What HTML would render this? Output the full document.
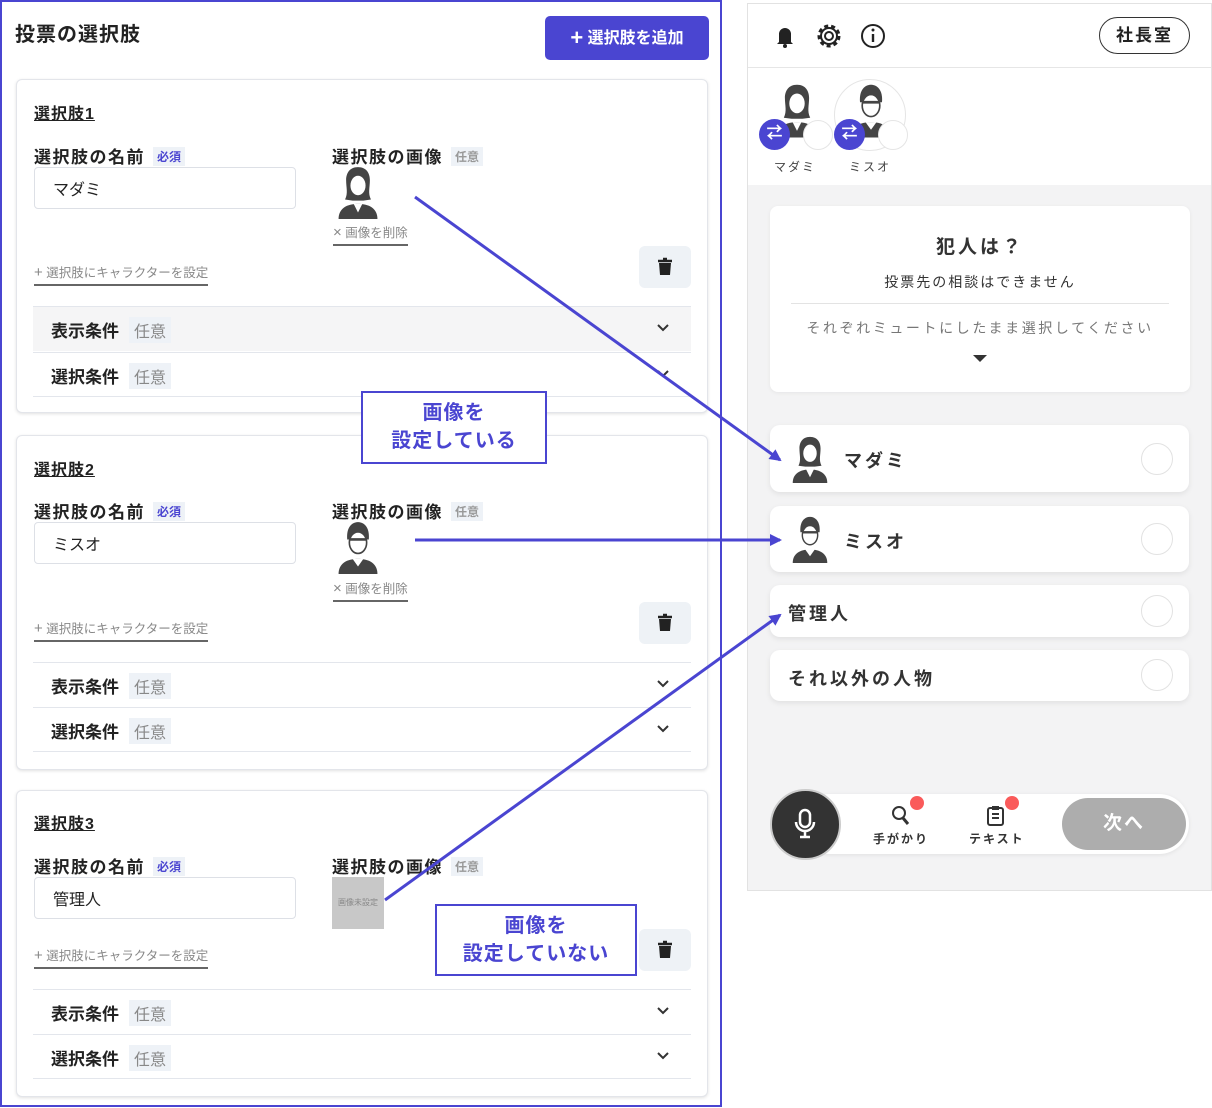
<!DOCTYPE html>
<html><head><meta charset="utf-8"><style>
*{box-sizing:border-box;margin:0;padding:0}
body{width:1212px;height:1108px;background:#fff;position:relative;overflow:hidden;font-family:"Liberation Sans","Noto Sans CJK JP",sans-serif;color:#222}
.a{position:absolute}
.lp{left:0;top:0;width:722px;height:1107px;border:2px solid #4a45d1}
.card{left:16px;width:692px;border:1px solid #e3e5ea;border-radius:6px;box-shadow:0 1px 3px rgba(0,0,0,.12);background:#fff}
.t{font-size:16px;font-weight:bold;text-decoration:underline;color:#222;letter-spacing:1px}
.lb{font-size:17px;font-weight:bold;color:#222;white-space:nowrap;letter-spacing:1.5px}
.tag{display:inline-block;font-size:12px;background:#eef2f7;padding:1px 4px;margin-left:8px;vertical-align:2px;font-weight:bold;letter-spacing:0}
.inp{border:1px solid #dde0e6;border-radius:4px;font-size:16px;padding:8px 18px;color:#222}
.sm{font-size:12.5px;color:#888;border-bottom:2px solid #666;padding-bottom:3px;white-space:nowrap}
.trash{width:52px;height:42px;background:#eef2f6;border-radius:6px}
.row{left:17px;width:658px;height:45px;border-top:1px solid #e3e6ec;font-size:17px;font-weight:bold;padding:10px 18px}
.row .tag2{display:inline-block;font-size:16px;color:#888;background:#eef2f7;padding:1px 5px;margin-left:10px;font-weight:normal}
.chev{position:absolute;right:22px;top:17px}
.rp{left:747px;top:3px;width:465px;height:888px;border:1px solid #e2e2e2;background:#f3f3f4}
.opt{left:770px;width:419px;background:#fff;border-radius:10px;box-shadow:0 2px 6px rgba(0,0,0,.08);font-size:18px;font-weight:bold;color:#333;letter-spacing:3px}
.radio{position:absolute;right:16px;width:32px;height:32px;border:1.5px solid #e2e2e2;border-radius:50%}
.box{border:2px solid #4a45d1;background:#fff;color:#4a45d1;font-size:20px;font-weight:bold;text-align:center;line-height:28px;letter-spacing:1px}
</style></head><body>
<svg width="0" height="0" style="position:absolute"><defs>
<symbol id="w" viewBox="0 0 40 50"><path d="M20 2c-8 0-11 6-11 12 0 7 2 12-1 18l7 1h10l7-1c-3-6-1-11-1-18 0-6-3-12-11-12z" fill="#444"/><ellipse cx="20" cy="19" rx="7" ry="9" fill="#fff"/><path d="M2 50c0-10 8-14 18-14s18 4 18 14z" fill="#444"/><path d="M16 36l4 8 4-8z" fill="#fff"/></symbol>
<symbol id="m" viewBox="0 0 40 50"><path d="M10 18c-1-12 5-16 10-16s11 4 10 16z" fill="#444"/><ellipse cx="20" cy="21" rx="8" ry="10" fill="#fff" stroke="#444" stroke-width="1.5"/><path d="M12 18h16" stroke="#444" stroke-width="2.5"/><path d="M2 50c0-10 8-14 18-14s18 4 18 14z" fill="#444"/><path d="M15 36l5 7 5-7z" fill="#fff"/></symbol>
<symbol id="cv" viewBox="0 0 12 8"><path d="M1 1l5 5 5-5" fill="none" stroke="#333" stroke-width="2"/></symbol>
<symbol id="tr" viewBox="0 0 52 42"><path d="M19 15h14M24 13h4" stroke="#222" stroke-width="2.5"/><path d="M20 17h12l-1 12h-10z" fill="#222"/></symbol>
</defs></svg>

<div class="a lp"></div>
<div class="a" style="left:15px;top:18px;font-size:20px;font-weight:bold;letter-spacing:1px">投票の選択肢</div>
<div class="a" style="left:545px;top:16px;width:164px;height:44px;background:#4a45d1;border-radius:5px;color:#fff;font-weight:bold;font-size:16px;line-height:44px;text-align:center"><span style="font-size:22px;vertical-align:-2px">+</span> 選択肢を追加</div>

<!-- card1 -->
<div class="a card" style="top:79px;height:334px"></div>
<div class="a t" style="left:34px;top:100px">選択肢1</div>
<div class="a lb" style="left:34px;top:143px">選択肢の名前<span class="tag" style="color:#4a45d1">必須</span></div>
<div class="a lb" style="left:332px;top:143px">選択肢の画像<span class="tag" style="color:#999">任意</span></div>
<div class="a inp" style="left:34px;top:167px;width:262px;height:42px">マダミ</div>
<svg class="a" style="left:335px;top:165px" width="46" height="54"><use href="#w"/></svg>
<div class="a sm" style="left:333px;top:222px"><span style="font-size:15px">×</span> 画像を削除</div>
<div class="a sm" style="left:34px;top:262px"><span style="font-size:15px">+</span> 選択肢にキャラクターを設定</div>
<div class="a trash" style="left:639px;top:246px"><svg width="52" height="42"><use href="#tr"/></svg></div>
<div class="a row" style="top:306px;background:#f5f5f6;left:33px">表示条件<span class="tag2">任意</span><svg class="chev" width="12" height="8"><use href="#cv"/></svg></div>
<div class="a row" style="top:352px;left:33px;border-bottom:1px solid #e3e6ec">選択条件<span class="tag2">任意</span><svg class="chev" width="12" height="8"><use href="#cv"/></svg></div>

<!-- card2 -->
<div class="a card" style="top:435px;height:335px"></div>
<div class="a t" style="left:34px;top:456px">選択肢2</div>
<div class="a lb" style="left:34px;top:498px">選択肢の名前<span class="tag" style="color:#4a45d1">必須</span></div>
<div class="a lb" style="left:332px;top:498px">選択肢の画像<span class="tag" style="color:#999">任意</span></div>
<div class="a inp" style="left:34px;top:522px;width:262px;height:42px">ミスオ</div>
<svg class="a" style="left:335px;top:520px" width="46" height="54"><use href="#m"/></svg>
<div class="a sm" style="left:333px;top:578px"><span style="font-size:15px">×</span> 画像を削除</div>
<div class="a sm" style="left:34px;top:618px"><span style="font-size:15px">+</span> 選択肢にキャラクターを設定</div>
<div class="a trash" style="left:639px;top:602px"><svg width="52" height="42"><use href="#tr"/></svg></div>
<div class="a row" style="top:662px;left:33px">表示条件<span class="tag2">任意</span><svg class="chev" width="12" height="8"><use href="#cv"/></svg></div>
<div class="a row" style="top:707px;left:33px;border-bottom:1px solid #e3e6ec">選択条件<span class="tag2">任意</span><svg class="chev" width="12" height="8"><use href="#cv"/></svg></div>

<!-- card3 -->
<div class="a card" style="top:790px;height:307px"></div>
<div class="a t" style="left:34px;top:810px">選択肢3</div>
<div class="a lb" style="left:34px;top:853px">選択肢の名前<span class="tag" style="color:#4a45d1">必須</span></div>
<div class="a lb" style="left:332px;top:853px">選択肢の画像<span class="tag" style="color:#999">任意</span></div>
<div class="a inp" style="left:34px;top:877px;width:262px;height:42px">管理人</div>
<div class="a" style="left:332px;top:877px;width:52px;height:52px;background:#c8c8c8;color:#888;font-size:8px;line-height:52px;text-align:center">画像未設定</div>
<div class="a sm" style="left:34px;top:945px"><span style="font-size:15px">+</span> 選択肢にキャラクターを設定</div>
<div class="a trash" style="left:639px;top:929px"><svg width="52" height="42"><use href="#tr"/></svg></div>
<div class="a row" style="top:989px;left:33px">表示条件<span class="tag2">任意</span><svg class="chev" width="12" height="8"><use href="#cv"/></svg></div>
<div class="a row" style="top:1034px;left:33px;border-bottom:1px solid #e3e6ec">選択条件<span class="tag2">任意</span><svg class="chev" width="12" height="8"><use href="#cv"/></svg></div>

<!-- right panel -->
<div class="a rp"></div>
<div class="a" style="left:748px;top:4px;width:463px;height:181px;background:#fff"></div>
<div class="a" style="left:748px;top:67px;width:463px;height:1px;background:#e6e6e6"></div>
<svg class="a" style="left:770px;top:20px" width="120" height="32">
<path d="M9 22V14a6 6 0 0 1 12 0v8l2 2H7z" fill="#222"/><circle cx="15" cy="26" r="2" fill="#222"/>
<circle cx="59" cy="16" r="4" fill="none" stroke="#222" stroke-width="2"/><circle cx="59" cy="16" r="10" fill="none" stroke="#222" stroke-width="3" stroke-dasharray="4 3"/><circle cx="59" cy="16" r="8" fill="none" stroke="#222" stroke-width="2"/>
<circle cx="103" cy="16" r="11" fill="none" stroke="#222" stroke-width="2"/><path d="M103 14v8" stroke="#222" stroke-width="2.4"/><circle cx="103" cy="10" r="1.5" fill="#222"/>
</svg>
<div class="a" style="left:1099px;top:17px;width:91px;height:37px;border:1.5px solid #333;border-radius:19px;font-size:17px;font-weight:bold;text-align:center;line-height:36px;letter-spacing:2px">社長室</div>
<svg class="a" style="left:775px;top:82px" width="44" height="56"><use href="#w"/></svg>
<div class="a" style="left:834px;top:79px;width:72px;height:72px;border:1px solid #e5e5e5;border-radius:50%"></div>
<svg class="a" style="left:849px;top:82px" width="44" height="56"><use href="#m"/></svg>
<div class="a" style="left:803px;top:120px;width:30px;height:30px;border:1px solid #e5e5e5;border-radius:50%;background:#fff"></div>
<div class="a" style="left:878px;top:120px;width:30px;height:30px;border:1px solid #e5e5e5;border-radius:50%;background:#fff"></div>
<div class="a" style="left:759px;top:119px;width:31px;height:31px;border-radius:50%;background:#4a45d1;color:#fff;font-size:16px;text-align:center;line-height:30px;font-weight:bold">⇄</div>
<div class="a" style="left:834px;top:119px;width:31px;height:31px;border-radius:50%;background:#4a45d1;color:#fff;font-size:16px;text-align:center;line-height:30px;font-weight:bold">⇄</div>
<div class="a" style="left:774px;top:158px;font-size:12px;color:#444;letter-spacing:2px">マダミ</div>
<div class="a" style="left:849px;top:158px;font-size:12px;color:#444;letter-spacing:2px">ミスオ</div>

<div class="a" style="left:770px;top:206px;width:420px;height:186px;background:#fff;border-radius:8px;box-shadow:0 1px 4px rgba(0,0,0,.06)"></div>
<div class="a" style="left:770px;top:232px;width:420px;text-align:center;font-size:19px;font-weight:bold;letter-spacing:3px;color:#333">犯人は？</div>
<div class="a" style="left:770px;top:272px;width:420px;text-align:center;font-size:14px;letter-spacing:2px;color:#333">投票先の相談はできません</div>
<div class="a" style="left:791px;top:303px;width:378px;height:1px;background:#e3e3e3"></div>
<div class="a" style="left:770px;top:318px;width:420px;text-align:center;font-size:14px;letter-spacing:2.6px;color:#777">それぞれミュートにしたまま選択してください</div>
<div class="a" style="left:973px;top:355px;width:0;height:0;border-left:7px solid transparent;border-right:7px solid transparent;border-top:7px solid #333"></div>

<div class="a opt" style="top:425px;height:67px"><svg class="a" style="left:20px;top:10px" width="40" height="48"><use href="#w"/></svg><span class="a" style="left:74px;top:22px">マダミ</span><div class="radio" style="top:18px"></div></div>
<div class="a opt" style="top:506px;height:66px"><svg class="a" style="left:20px;top:9px" width="40" height="48"><use href="#m"/></svg><span class="a" style="left:74px;top:22px">ミスオ</span><div class="radio" style="top:17px"></div></div>
<div class="a opt" style="top:585px;height:52px"><span class="a" style="left:18px;top:15px">管理人</span><div class="radio" style="top:10px"></div></div>
<div class="a opt" style="top:650px;height:51px"><span class="a" style="left:18px;top:15px">それ以外の人物</span><div class="radio" style="top:9px"></div></div>

<div class="a" style="left:800px;top:794px;width:389px;height:60px;background:#fff;border-radius:30px;box-shadow:0 1px 4px rgba(0,0,0,.08)"></div>
<div class="a" style="left:770px;top:789px;width:71px;height:71px;border-radius:50%;background:#333;border:2px solid #ccc"></div>
<svg class="a" style="left:790px;top:808px" width="30" height="34"><rect x="10" y="2" width="10" height="17" rx="5" fill="none" stroke="#fff" stroke-width="2.5"/><path d="M6 14a9 9 0 0 0 18 0M15 23v6M10 29h10" fill="none" stroke="#fff" stroke-width="2.5"/></svg>
<svg class="a" style="left:890px;top:802px" width="24" height="26"><circle cx="9" cy="11" r="6" fill="none" stroke="#333" stroke-width="2"/><path d="M13 16l5 6" stroke="#333" stroke-width="3"/></svg>
<div class="a" style="left:910px;top:796px;width:14px;height:14px;border-radius:50%;background:#fa5a5a"></div>
<div class="a" style="left:873px;top:830px;font-size:12px;font-weight:bold;letter-spacing:2px;color:#333">手がかり</div>
<svg class="a" style="left:985px;top:804px" width="22" height="24"><rect x="3" y="4" width="15" height="17" rx="2" fill="none" stroke="#333" stroke-width="2"/><path d="M7 10h7M7 14h7" stroke="#333" stroke-width="2"/><rect x="7" y="2" width="7" height="4" fill="#333"/></svg>
<div class="a" style="left:1005px;top:796px;width:14px;height:14px;border-radius:50%;background:#fa5a5a"></div>
<div class="a" style="left:969px;top:830px;font-size:12px;font-weight:bold;letter-spacing:2px;color:#333">テキスト</div>
<div class="a" style="left:1062px;top:798px;width:124px;height:52px;border-radius:26px;background:#adadad;color:#fff;font-size:19px;font-weight:bold;text-align:center;line-height:52px;letter-spacing:2px">次へ</div>

<!-- arrows -->
<svg class="a" style="left:0;top:0" width="1212" height="1108">
<defs><marker id="ar" markerWidth="12" markerHeight="12" refX="10" refY="6" orient="auto" markerUnits="userSpaceOnUse"><path d="M0 0L12 6L0 12z" fill="#4a45d1"/></marker></defs>
<g stroke="#4a45d1" stroke-width="3" fill="none">
<path d="M415 197L780 460" marker-end="url(#ar)"/>
<path d="M415 540L780 540" marker-end="url(#ar)"/>
<path d="M385 900L780 615" marker-end="url(#ar)"/>
</g></svg>
<div class="a box" style="left:361px;top:391px;width:186px;height:73px;padding-top:6px">画像を<br>設定している</div>
<div class="a box" style="left:435px;top:904px;width:202px;height:72px;padding-top:6px">画像を<br>設定していない</div>
</body></html>
